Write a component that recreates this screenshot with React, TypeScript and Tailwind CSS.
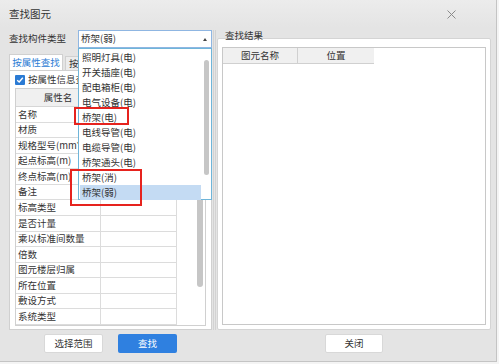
import React from "react"

const rows = [
  "名称",
  "材质",
  "规格型号(mm*mm)",
  "起点标高(m)",
  "终点标高(m)",
  "备注",
  "标高类型",
  "是否计量",
  "乘以标准间数量",
  "倍数",
  "图元楼层归属",
  "所在位置",
  "敷设方式",
  "系统类型",
]

const options = [
  "照明灯具(电)",
  "开关插座(电)",
  "配电箱柜(电)",
  "电气设备(电)",
  "桥架(电)",
  "电线导管(电)",
  "电缆导管(电)",
  "桥架通头(电)",
  "桥架(消)",
  "桥架(弱)",
]

const font = { fontFamily: "'Noto Sans CJK SC', 'Noto Sans', sans-serif" }

const App = () => {
  return (
    <div className="w-[499px] h-[364px] bg-[#f4f4f4] text-[#333]" style={font}>
      <div className="relative w-[497px] h-[362px] bg-[#e4e4e4] border-r border-b border-[#c4c4c4] flex flex-col">
        {/* title */}
        <div className="h-[28px] flex items-center justify-between pl-[9px] pr-[40px] bg-gradient-to-b from-[#ececec] to-[#e4e4e4]">
          <span className="text-[10.5px] leading-none">查找图元</span>
          <svg width="9" height="9" viewBox="0 0 9 9" className="text-[#8a8a8a]">
            <path d="M0.5 0.5 L8.5 8.5 M8.5 0.5 L0.5 8.5" stroke="currentColor" strokeWidth="1" />
          </svg>
        </div>

        <div className="flex pl-[9px] pt-[2px] h-[302px]">
          {/* left column */}
          <div className="w-[203px] flex flex-col">
            <div className="flex items-center h-[18px]">
              <span className="w-[69px] text-[9.5px] leading-none">查找构件类型</span>
              <div className="relative w-[134px] h-[18px]">
                <div className="h-full bg-white border border-[#8fb6e2] flex items-center justify-between pl-[2px] pr-[4px]">
                  <span className="text-[9.5px] leading-none">桥架(弱)</span>
                  <svg width="4" height="3" viewBox="0 0 4 3">
                    <path d="M0 3 L2 0 L4 3 Z" fill="#444" />
                  </svg>
                </div>
                {/* dropdown list */}
                <div className="absolute left-0 top-[18px] w-[134px] h-[152px] bg-white border border-[#6fb5d9] z-20 flex">
                  <div className="flex-1 pt-[1px] pl-[1px]">
                    {options.map((o, i) => (
                      <div
                        key={o}
                        className={
                          "h-[15px] flex items-center pl-[2px] text-[9.5px] leading-none " +
                          (i === options.length - 1 ? "bg-[#c4dbf3]" : "")
                        }
                      >
                        {o}
                      </div>
                    ))}
                  </div>
                  <div className="w-[10px] pt-[11px] flex justify-center">
                    <div className="w-[5px] h-[115px] rounded-full bg-[#c6c6c6]" />
                  </div>
                </div>
              </div>
            </div>

            {/* tabs */}
            <div className="mt-[7px] flex items-end h-[15px]">
              <div className="w-[54px] h-[16px] bg-white border border-b-0 border-[#d0d0d0] text-[#2b7bd4] text-[9.5px] leading-none flex items-center justify-center">
                按属性查找
              </div>
              <div className="ml-[2px] w-[13px] h-[14px] bg-[#ececec] border border-b-0 border-r-0 border-[#d0d0d0] text-[9.5px] leading-none flex items-center pl-[3px] overflow-hidden whitespace-nowrap">
                按
              </div>
            </div>
            <div className="h-[260px] bg-white border border-[#d0d0d0] px-[5px] flex flex-col">
              <div className="h-[17px] flex items-center gap-[3px]">
                <div className="w-[10px] h-[10px] rounded-[1px] bg-[#2b7bd4] flex items-center justify-center">
                  <svg width="8" height="8" viewBox="0 0 8 8">
                    <path d="M1.2 4.2 L3.2 6 L6.8 1.8" stroke="white" strokeWidth="1.4" fill="none" />
                  </svg>
                </div>
                <span className="text-[9.5px] leading-none w-[50px] overflow-hidden whitespace-nowrap">按属性信息查</span>
              </div>
              <div className="relative h-[238px] border border-[#d0d0d0] flex">
                <div className="w-[160px] flex flex-col">
                  <div className="h-[18px] flex bg-[#f0f0f0] border-b border-[#d6d6d6] text-[9.5px] leading-none">
                    <div className="w-[85px] border-r border-[#d6d6d6] flex items-center justify-center">属性名</div>
                    <div className="flex-1" />
                  </div>
                  {rows.map((r) => (
                    <div key={r} className="h-[15.6px] flex border-b border-[#dcdcdc] text-[9.5px] leading-none">
                      <div className="w-[85px] border-r border-[#dcdcdc] flex items-center pl-[2px] whitespace-nowrap overflow-hidden">
                        {r}
                      </div>
                      <div className="flex-1" />
                    </div>
                  ))}
                </div>
                <div className="flex-1 border-l border-[#dcdcdc] flex justify-end pr-[2px] pt-[4px]">
                  <div className="w-[6px] h-[194px] rounded-full bg-[#c6c6c6]" />
                </div>
              </div>
            </div>
          </div>

          {/* right column */}
          <div className="ml-[1px] pl-[1px] border-l-[3px] border-double border-[#d2d2d2] w-[278px] flex flex-col">
            <div className="pl-[8px] h-[11px] text-[9.5px] leading-none relative z-10 -mb-[3px] pt-[1px]">查找结果</div>
            <div className="h-[293px] bg-white border border-[#d4d4d4] rounded-[2px] px-[4px] pt-[8px] pb-[4px]">
              <div className="h-full border border-[#c8c8c8]">
                <div className="flex h-[16px] text-[9.5px] leading-none">
                  <div className="w-[75px] bg-[#f0f0f0] border-r border-b border-[#d0d0d0] flex items-center justify-center">图元名称</div>
                  <div className="w-[76px] bg-[#f0f0f0] border-b border-[#d0d0d0] flex items-center justify-center">位置</div>
                </div>
              </div>
            </div>
          </div>
        </div>

        {/* buttons */}
        <div className="relative flex items-start pt-[4px] text-[9.5px] leading-none">
          <button className="ml-[44px] w-[59px] h-[19px] bg-white border border-[#d8d8d8] rounded-[2px]">选择范围</button>
          <button className="ml-[15px] w-[59px] h-[19px] bg-[#2f80e0] text-white rounded-[2px]">查找</button>
          <button className="ml-[148px] w-[58px] h-[19px] bg-white border border-[#d8d8d8] rounded-[2px]">关闭</button>
        </div>

        {/* red highlight marks */}
        <div className="absolute left-[74px] top-[107px] w-[55px] h-[18px] border-2 border-[#e6231e] z-30" />
        <div className="absolute left-[70px] top-[169px] w-[72px] h-[37px] border-2 border-[#e6231e] z-30" />
      </div>
    </div>
  )
}

export default App
